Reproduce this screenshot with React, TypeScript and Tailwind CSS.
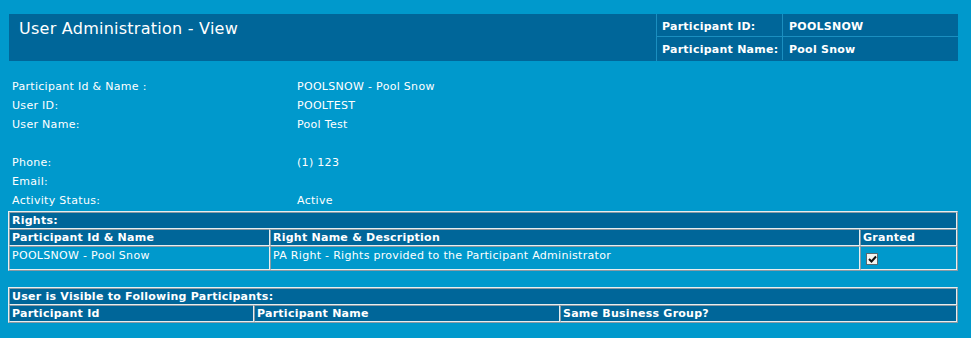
const info = [
  { label: "Participant Id & Name :", value: "POOLSNOW - Pool Snow" },
  { label: "User ID:", value: "POOLTEST" },
  { label: "User Name:", value: "Pool Test" },
  { label: "", value: "" },
  { label: "Phone:", value: "(1) 123" },
  { label: "Email:", value: "" },
  { label: "Activity Status:", value: "Active" },
];

// inset cell edge, like an old html table with border=1
const cell =
  "border border-t-[#8a9aa4] border-l-[#8a9aa4] border-r-[#e8eef0] border-b-[#e8eef0] px-[2px] overflow-hidden whitespace-nowrap";

const box =
  "overflow-hidden border border-t-[#e8eef0] border-l-[#e8eef0] border-r-[#8a9aa4] border-b-[#8a9aa4] leading-[15px]";

const head = "bg-[#006699] font-bold tracking-[0.25px]";

export default function App() {
  return (
    <div
      className="h-[338px] bg-[#0099cc] text-white text-[11px] tracking-[0.3px] pt-[14px] overflow-hidden"
      style={{ fontFamily: '"DejaVu Sans", Verdana, sans-serif' }}
    >
      <div className="ml-[8px] w-[950px]">
        {/* page header */}
        <div className="ml-[1px] h-[47px] flex bg-[#006699]">
          <div className="flex-1 pl-[10px] pt-[5px] text-[16px] tracking-[0.25px] leading-[20px]">User Administration - View</div>
          <div className="w-[302px] border-l border-[#1b8fc0] font-bold tracking-[0.25px]">
            <div className="flex h-[23px] border-b border-[#1b8fc0]">
              <div className="w-[126px] pl-[5px] pt-[5px] border-r border-[#1b8fc0]">Participant ID:</div>
              <div className="pl-[6px] pt-[5px]">POOLSNOW</div>
            </div>
            <div className="flex h-[23px]">
              <div className="w-[126px] pl-[5px] pt-[5px] border-r border-[#1b8fc0]">Participant Name:</div>
              <div className="pl-[6px] pt-[5px]">Pool Snow</div>
            </div>
          </div>
        </div>

        {/* user details */}
        <div className="pl-[4px] pt-[16px] pb-[1px]">
          {info.map((r, i) => (
            <div key={i} className="grid grid-cols-[285px_1fr] h-[19px] leading-[19px]">
              <span>{r.label}</span>
              <span>{r.value}</span>
            </div>
          ))}
        </div>

        {/* rights */}
        <div className={box}>
          <div className={`${cell} ${head} h-[17px]`}>Rights:</div>
          <div className={`grid grid-cols-[261px_590px_1fr] h-[17px] ${head}`}>
            <div className={cell}>Participant Id &amp; Name</div>
            <div className={cell}>Right Name &amp; Description</div>
            <div className={cell}>Granted</div>
          </div>
          <div className="grid grid-cols-[261px_590px_1fr] h-[24px]">
            <div className={`${cell} pt-[1px]`}>POOLSNOW - Pool Snow</div>
            <div className={`${cell} pt-[1px]`}>PA Right - Rights provided to the Participant Administrator</div>
            <div className={`${cell} pt-[6px] pl-[5px]`}>
              <span className="flex w-[12px] h-[12px] bg-[#f4f4f0] border border-[#5a6a70] items-center justify-center">
                <svg width="9" height="8" viewBox="0 0 9 8">
                  <path d="M1 4 L3.5 6.5 L8 1.5" stroke="#111" strokeWidth="2" fill="none" />
                </svg>
              </span>
            </div>
          </div>
        </div>

        {/* visibility */}
        <div className={`${box} mt-[16px]`}>
          <div className={`${cell} ${head} h-[17px]`}>User is Visible to Following Participants:</div>
          <div className={`grid grid-cols-[245px_306px_1fr] h-[17px] ${head}`}>
            <div className={cell}>Participant Id</div>
            <div className={cell}>Participant Name</div>
            <div className={cell}>Same Business Group?</div>
          </div>
        </div>
      </div>
    </div>
  );
}
